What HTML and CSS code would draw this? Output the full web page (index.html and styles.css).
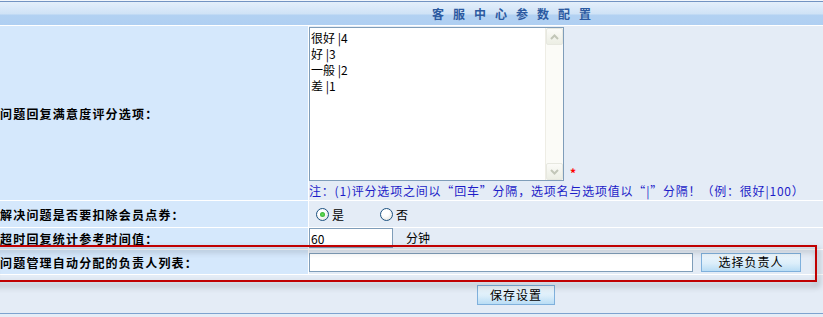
FILE: index.html
```html
<!DOCTYPE html>
<html lang="zh-CN">

<head>
   <meta charset="UTF-8">
   <meta name="viewport" content="width=device-width, initial-scale=1.0">
   <title>客服中心参数配置</title>
   <link rel="stylesheet" href="styles.css">
</head>

<body>
   <div class="page">
      <div class="header">
         <span class="title">客服中心参数配置</span>
      </div>

      <div class="row row-score">
         <div class="label">问题回复满意度评分选项：</div>
         <div class="field">
            <div class="area-line">
               <div class="area-box">
                  <textarea class="area" spellcheck="false">很好 |4
好 |3
一般 |2
差 |1</textarea>
                  <div class="scrollbar">
                     <span class="scroll-btn">
                        <svg width="9" height="6" viewBox="0 0 9 6"><path d="M1 5l3.5-3.5L8 5" fill="none" stroke="#c2c6b8" stroke-width="2"/></svg>
                     </span>
                     <span class="scroll-track"></span>
                     <span class="scroll-btn">
                        <svg width="9" height="6" viewBox="0 0 9 6"><path d="M1 1l3.5 3.5L8 1" fill="none" stroke="#c2c6b8" stroke-width="2"/></svg>
                     </span>
                  </div>
               </div>
               <span class="required">*</span>
            </div>
            <div class="note">注：(1)评分选项之间以“回车”分隔，选项名与选项值以“|”分隔！（例：很好|100）</div>
         </div>
      </div>

      <div class="row row-radio">
         <div class="label">解决问题是否要扣除会员点券：</div>
         <div class="field field-inline">
            <label class="radio"><span class="radio-dot checked"></span>是</label>
            <label class="radio"><span class="radio-dot"></span>否</label>
         </div>
      </div>

      <div class="row row-time">
         <div class="label">超时回复统计参考时间值：</div>
         <div class="field field-inline">
            <input class="text-input short" type="text" value="60">
            <span class="unit">分钟</span>
         </div>
      </div>

      <div class="row row-owner">
         <div class="label">问题管理自动分配的负责人列表：</div>
         <div class="field field-inline">
            <input class="text-input long" type="text" value="">
            <button class="btn btn-pick">选择负责人</button>
         </div>
      </div>

      <div class="footer">
         <button class="btn btn-save">保存设置</button>
      </div>

      <div class="highlight"></div>
   </div>
</body>

</html>
```

FILE: styles.css
```css
body {
   margin: 0;
   background-color: #e6edf6;
   font-family: "Noto Sans CJK SC", "DejaVu Sans", sans-serif;
   font-size: 12px;
   color: #000;
   overflow: hidden;
}

.page {
   position: relative;
   width: 823px;
   padding-top: 1px;
   background-color: #f2f6fb;
}

.header {
   height: 23px;
   border-top: 1px solid #7393c2;
   border-bottom: 1px solid #fff;
   background: linear-gradient(to bottom, #e4effb 0, #cfe2f6 12px, #b2d1f2 13px, #afcff2 100%);
   display: flex;
   align-items: center;
   padding-left: 432px;
}

.title {
   font-weight: bold;
   color: #2c5aa0;
   letter-spacing: 9px;
   line-height: 14px;
}

.row {
   display: flex;
   border-bottom: 1px solid #fff;
}

.label {
   width: 308px;
   flex-shrink: 0;
   border-right: 1px solid #fff;
   background-color: #d5e8fc;
   display: flex;
   align-items: center;
   font-weight: bold;
   letter-spacing: 1.2px;
   white-space: nowrap;
}

.field {
   flex: 1;
   background-color: #e4ecf6;
}

.field-inline {
   display: flex;
   align-items: center;
}

.row-score {
   height: 174px;
}

.row-score .field {
   padding-top: 1px;
}

.area-line {
   display: flex;
   align-items: flex-end;
}

.area-box {
   display: flex;
   width: 253px;
   height: 152px;
   border: 1px solid #7f9db9;
   background-color: #fff;
}

.area {
   flex: 1;
   border: none;
   margin: 0;
   padding: 2px 1px;
   resize: none;
   overflow: hidden;
   outline: none;
   font-family: "Noto Sans CJK SC", "DejaVu Sans", sans-serif;
   font-size: 12px;
   line-height: 16px;
}

.scrollbar {
   width: 17px;
   display: flex;
   flex-direction: column;
   background-color: #fbfbf7;
   border-left: 1px solid #eeede5;
}

.scroll-btn {
   height: 17px;
   box-sizing: border-box;
   border: 1px solid #e7e8e0;
   border-radius: 2px;
   background: linear-gradient(to bottom, #fbfbf8, #eceee4);
   display: flex;
   align-items: center;
   justify-content: center;
}

.scroll-track {
   flex: 1;
}

.required {
   color: #f00;
   font-weight: bold;
   margin-left: 6px;
   line-height: 12px;
   margin-bottom: 2px;
}

.note {
   margin-top: 3px;
   color: #1d1dc8;
   white-space: nowrap;
   line-height: 14px;
   letter-spacing: 0.8px;
}

.row-radio {
   height: 26px;
}

.radio {
   display: flex;
   align-items: center;
   gap: 3px;
   margin-left: 7px;
   width: 57px;
}

.radio-dot {
   width: 11px;
   height: 11px;
   border: 1px solid #1c5180;
   border-radius: 50%;
   background: radial-gradient(circle at 40% 35%, #fff 0, #fff 35%, #dcdcd4 100%);
   display: flex;
   align-items: center;
   justify-content: center;
}

.radio-dot.checked::after {
   content: "";
   width: 5px;
   height: 5px;
   border-radius: 50%;
   background: radial-gradient(circle, #6be05a 0, #21a121 100%);
}

.row-time {
   height: 21px;
}

.row-time .field {
   align-items: flex-start;
}

.text-input {
   box-sizing: border-box;
   border: 1px solid #7f9db9;
   background-color: #fff;
   margin: 0;
   padding: 0 1px;
   font-family: "Noto Sans CJK SC", "DejaVu Sans", sans-serif;
   font-size: 12px;
   outline: none;
}

.short {
   width: 84px;
   height: 20px;
}

.unit {
   margin-left: 13px;
   line-height: 20px;
}

.row-owner {
   height: 24px;
}

.long {
   width: 384px;
   height: 19px;
}

.btn {
   box-sizing: border-box;
   height: 19px;
   padding: 0;
   border: 1px solid #7fb0dc;
   background: linear-gradient(to bottom, #eef7fd 0, #dceefa 55%, #b9ddf5 100%);
   font-family: "Noto Sans CJK SC", "DejaVu Sans", sans-serif;
   font-size: 12px;
   line-height: 16px;
   letter-spacing: 1px;
   color: #000;
}

.btn-pick {
   width: 100px;
   margin-left: 8px;
}

.footer {
   height: 39px;
   border-bottom: 1px solid #7ea3cf;
   padding-left: 477px;
   padding-top: 10px;
   box-sizing: border-box;
   background-color: #e4ecf6;
}

.btn-save {
   width: 78px;
   height: 20px;
}

.highlight {
   position: absolute;
   left: -10px;
   top: 245px;
   width: 823px;
   height: 33px;
   border: 2px solid #c00000;
   filter: drop-shadow(2px 4px 3px rgba(0, 0, 0, 0.4));
}
```
